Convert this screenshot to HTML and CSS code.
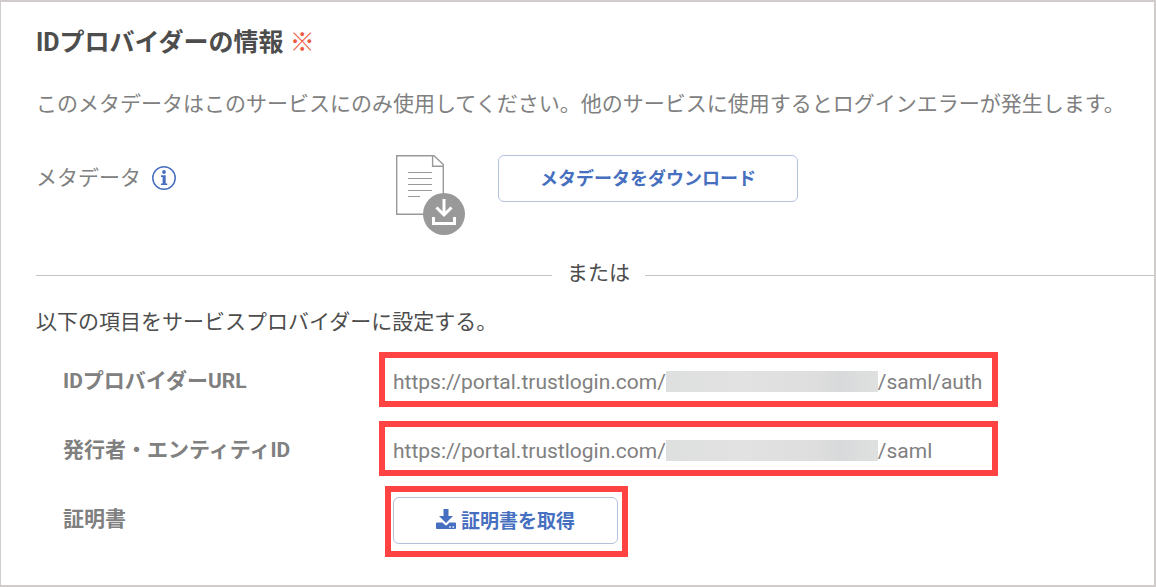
FILE: index.html
```
<!DOCTYPE html>
<html lang="ja">

<head>
    <meta charset="UTF-8">
    <meta name="viewport" content="width=device-width, initial-scale=1">
    <title>IDプロバイダーの情報</title>
    <link rel="stylesheet" href="styles.css">
</head>

<body>
    <section class="panel">
        <h1>IDプロバイダーの情報 <span class="required">※</span></h1>
        <p class="note">このメタデータはこのサービスにのみ使用してください。他のサービスに使用するとログインエラーが発生します。</p>

        <div class="metadata">
            <div class="metadata-label">
                メタデータ
                <svg class="info-icon" viewBox="0 0 24 24" width="24" height="24">
                    <circle cx="12" cy="12" r="11.2" fill="none" stroke="currentColor" stroke-width="1.5" />
                    <circle cx="12" cy="6" r="1.9" fill="currentColor" />
                    <path d="M9 9.300h4.700v8.100H15.300V19H8.900v-1.600h1.700v-6.500H9z" fill="currentColor" />
                </svg>
            </div>
            <svg class="file-icon" viewBox="0 0 70 80" width="70" height="80">
                <g fill="none" stroke="#999" stroke-width="1.400">
                    <path d="M.7.700H38L47.300 9.500V59.300H.7z" />
                    <path d="M36.600.700V11.300H47.300" />
                    <path d="M12 17.500H36M12 23.500H36M12 29.500H36M12 35.500H36M12 41.500H24" stroke-width="1.200" />
                </g>
                <circle cx="48" cy="59" r="21" fill="#999" />
                <g fill="none" stroke="#fff" stroke-width="3">
                    <path d="M48 44V60M40.500 52.500L48 60L55.500 52.500" />
                    <path d="M37.500 62V68.500H58.500V62" />
                </g>
            </svg>
            <button type="button" class="btn btn-wide">メタデータをダウンロード</button>
        </div>

        <div class="divider">または</div>

        <p class="lead">以下の項目をサービスプロバイダーに設定する。</p>

        <dl class="settings">
            <dt>IDプロバイダーURL</dt>
            <dd class="marked">https://portal.trustlogin.com/<span class="masked"></span>/saml/auth</dd>
            <dt>発行者・エンティティID</dt>
            <dd class="marked">https://portal.trustlogin.com/<span class="masked"></span>/saml</dd>
            <dt>証明書</dt>
            <dd class="marked marked-btn">
                <button type="button" class="btn btn-cert">
                    <svg viewBox="0 0 20 20" width="20" height="20">
                        <path d="M7.500 0h5v7H17l-7 7-7-7h4.500z" fill="currentColor" />
                        <path d="M1 13.500h5.500l2.300 2.300a1.700 1.700 0 0 0 2.400 0l2.300-2.300H19a1 1 0 0 1 1 1V19a1 1 0 0 1-1 1H1a1 1 0 0 1-1-1v-4.500a1 1 0 0 1 1-1z" fill="currentColor" />
                        <path d="M13.300 17.200h1.500v1.500h-1.500zM16.500 17.200H18v1.500h-1.500z" fill="#fff" />
                    </svg>
                    証明書を取得
                </button>
            </dd>
        </dl>
    </section>
</body>

</html>
```

FILE: styles.css
```
* {
    box-sizing: border-box;
}

body {
    margin: 0;
    font-family: Roboto, "Noto Sans CJK JP", sans-serif;
    font-size: 21px;
    line-height: 32px;
    color: #808080;
    background: #fff;
}

.panel {
    min-height: 100vh;
    padding: 25px 0 24px 35px;
    border: 2px solid #d0cccc;
    border-left-width: 1px;
    overflow: hidden;
}

h1 {
    margin: 0;
    font-size: 25px;
    line-height: 32px;
    color: #4d4d4d;
}

.required {
    font-weight: normal;
    color: #ee5740;
}

.note {
    margin: 29px 0 35px;
}

.metadata {
    display: flex;
    align-items: flex-start;
}

.metadata-label {
    display: flex;
    align-items: center;
    gap: 11px;
    width: 360px;
    height: 45px;
}

.info-icon {
    color: #486ebf;
}

.file-icon {
    margin-right: 32px;
}

.btn {
    height: 47px;
    padding: 0 0 3px;
    border: 1px solid #b4c1dc;
    border-radius: 6px;
    background: #fff;
    font-family: inherit;
    font-weight: bold;
    color: #466fc0;
    cursor: pointer;
}

.btn:hover {
    background: #f4f7fc;
}

.btn-wide {
    width: 300px;
    font-size: 18px;
}

/* 区切り線 */
.divider {
    display: flex;
    align-items: center;
    gap: 15px;
    margin: 22px -7px 17px 0;
    color: #4d4d4d;
}

.divider::before,
.divider::after {
    content: "";
    flex: 1;
    margin-top: 4px;
    border-top: 1px solid #c4c4c4;
}

.lead {
    margin: 0 0 14px;
    color: #4d4d4d;
}

.settings {
    display: grid;
    grid-template-columns: 316px 619px;
    row-gap: 14px;
    align-items: start;
    margin: 0;
    padding-left: 27px;
}

dt {
    padding-top: 13px;
    font-weight: bold;
}

dd {
    margin: 0;
}

/* 赤枠 */
.marked {
    display: flex;
    align-items: center;
    height: 55px;
    padding: 4px 8px 0;
    border: 6px solid #ff4343;
}

.masked {
    width: 212px;
    height: 21px;
    background: linear-gradient(90deg, #dedfdf, #e2e2e2 35%, #dedede 70%, #d8d9da 82%, #dfe0e0);
}

.marked-btn {
    width: 243px;
    height: 71px;
    margin: -4px 0 0 6px;
    padding: 0 2px 2px;
}

.btn-cert {
    display: flex;
    justify-content: center;
    align-items: center;
    gap: 5px;
    width: 225px;
    font-size: 19px;
}
```
